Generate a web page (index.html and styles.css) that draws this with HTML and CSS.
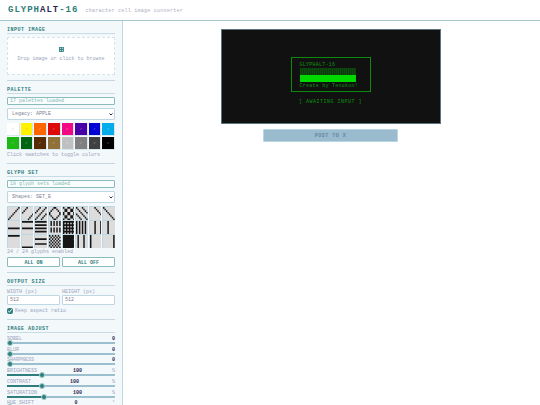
FILE: index.html
```html
<!DOCTYPE html>
<html lang="en">
<head>
<meta charset="utf-8">
<title>GLYPHALT-16</title>
<link rel="stylesheet" href="styles.css">
</head>
<body>
<header class="header">
  <h1 class="logo">GLYPH<span class="logo-alt">ALT</span>-16</h1>
  <p class="tagline">character cell image converter</p>
</header>
<div class="layout">
  <aside class="sidebar">
    <section class="section">
      <h2>INPUT IMAGE</h2>
      <button class="dropzone" type="button">
        <svg class="drop-icon" viewBox="0 0 10 10" aria-hidden="true"><rect x="1" y="1" width="8" height="8"/><path d="M5 1v8M1 5h8"/></svg>
        <span>Drop image or click to browse</span>
      </button>
    </section>
    <section class="section">
      <h2>PALETTE</h2>
      <p class="status">17 palettes loaded</p>
      <select class="select" aria-label="Palette"><option>Legacy: APPLE</option></select>
      <div class="swatches" id="swatches"></div>
      <p class="hint">Click swatches to toggle colors</p>
    </section>
    <section class="section">
      <h2>GLYPH SET</h2>
      <p class="status">18 glyph sets loaded</p>
      <select class="select" aria-label="Glyph set"><option>Shapes: SET_E</option></select>
      <div class="glyphs" id="glyphs"></div>
      <p class="hint">24 / 24 glyphs enabled</p>
      <div class="pair toggles">
        <button class="toggle" type="button">ALL ON</button>
        <button class="toggle" type="button">ALL OFF</button>
      </div>
    </section>
    <section class="section">
      <h2>OUTPUT SIZE</h2>
      <div class="pair">
        <div class="field"><label for="w">WIDTH (px)</label><input id="w" type="text" value="512"></div>
        <div class="field"><label for="h">HEIGHT (px)</label><input id="h" type="text" value="512"></div>
      </div>
      <label class="check"><input type="checkbox" checked><span>Keep aspect ratio</span></label>
    </section>
    <section class="section">
      <h2>IMAGE ADJUST</h2>
      <div class="sliders" id="sliders"></div>
    </section>
  </aside>
  <main class="main">
    <div class="screen">
      <div class="banner">
        <p>GLYPHALT-16</p>
        <div class="bar-dim"></div>
        <div class="bar-lit"></div>
        <p>Create by Tenokun!</p>
      </div>
      <p class="waiting">[ AWAITING INPUT ]</p>
    </div>
    <button class="post" type="button">POST TO X</button>
  </main>
</div>
<script src="app.js"></script>
</body>
</html>
```
FILE: styles.css
```css
* { box-sizing: border-box; }

body {
  margin: 0;
  height: 100vh;
  overflow: hidden;
  display: flex;
  flex-direction: column;
  background: #fff;
  color: #9aa3bd;
  font: 5px/6px "Liberation Mono", monospace;
}

h1, h2, p { margin: 0; }

button, input, select { font: inherit; color: inherit; margin: 0; }

.header {
  flex: none;
  display: flex;
  align-items: center;
  gap: 7px;
  height: 21px;
  padding: 0 8px;
  border-bottom: 1px solid #a6c5d1;
}

.logo {
  font-size: 9px;
  line-height: 10px;
  letter-spacing: 1px;
  color: #2f7d7d;
}

.logo-alt { color: #2d2b55; }

.tagline { padding-top: 2px; letter-spacing: 0.05em; color: #a9adc4; }

.layout { flex: 1; min-height: 0; display: flex; }

.sidebar {
  flex: none;
  width: 123px;
  padding: 0 7px;
  overflow: hidden;
  background: #f3f8fb;
  border-right: 1px solid #bed7e2;
}

.section {
  padding: 6px 0 5px;
  border-bottom: 1px solid #c4d6e2;
}

.section h2 {
  margin-bottom: 3px;
  border-bottom: 1px solid #c9dce6;
  font-size: 5px;
  line-height: 6px;
  letter-spacing: 0.1em;
  color: #2f7d7d;
}

.dropzone {
  display: flex;
  flex-direction: column;
  align-items: center;
  gap: 4px;
  width: 100%;
  height: 38px;
  padding: 9px 0 0;
  border: 1px dashed #d2e5ec;
  background: #fff;
}

.drop-icon {
  width: 5px;
  height: 5px;
  fill: #a9cece;
  stroke: #2f7d7d;
  stroke-width: 1.6;
}

.status {
  height: 8px;
  margin-bottom: 3px;
  padding: 0 2px;
  border: 1px solid #8bbcbc;
  border-radius: 1px;
  background: #f9fdfd;
  color: #86b9b9;
}

.select {
  display: block;
  width: 100%;
  height: 12px;
  margin-bottom: 3px;
  padding: 0 4px;
  border: 1px solid #bed7e2;
  border-radius: 1px;
  appearance: none;
  background: #fff url("data:image/svg+xml,%3Csvg xmlns='http://www.w3.org/2000/svg' viewBox='0 0 4 3'%3E%3Cpath d='M.5 .5 2 2 3.5 .5' fill='none' stroke='%232d2b55'/%3E%3C/svg%3E") no-repeat right 1px center / 4px 3px;
  color: #7b7d94;
}

.swatches, .glyphs {
  display: grid;
  grid-template-columns: repeat(8, 1fr);
  grid-auto-rows: 13px;
  gap: 1px;
  margin-bottom: 2px;
}

.swatch {
  padding: 0;
  border: 1px solid #d5e6ed;
  border-width: 0 1px 1px 0;
  color: #ffffffaa;
  font-size: 4px;
  line-height: 4px;
}

.swatch.light { color: #777b88aa; }

.glyph {
  padding: 0;
  border: 1px solid #bed7e2;
  border-width: 1px 0 0 1px;
  background: #dcdcdc;
}

.glyph svg { display: block; width: 100%; height: 100%; fill: #161616; }

.glyphs { gap: 0 1px; grid-auto-rows: 14px; margin-bottom: 1px; }

.pair { display: grid; grid-template-columns: 1fr 1fr; gap: 2px; }

.toggles { margin-top: 2px; }

.toggle {
  height: 10px;
  padding: 1px 0 0;
  border: 1px solid #8bbcbc;
  border-radius: 1px;
  background: #fff;
  color: #2f7d7d;
  font-weight: bold;
}

.field label { display: block; }

.field input {
  display: block;
  width: 100%;
  height: 10px;
  padding: 0 2px;
  border: 1px solid #bed7e2;
  border-radius: 1px;
  background: #fff;
  color: #7b7d94;
}

.check {
  display: flex;
  align-items: center;
  gap: 2px;
  margin-top: 3px;
}

.check input { width: 6px; height: 6px; accent-color: #2f7d7d; }

.sliders { display: grid; grid-auto-rows: 1fr; height: 75px; }

.slider-head { display: flex; justify-content: space-between; }

.slider-head output { padding-left: 6px; color: #2d2b55; font-weight: bold; }

.slider input {
  display: block;
  width: 100%;
  height: 2px;
  appearance: none;
  background: linear-gradient(90deg, #2f7d7d var(--fill), #9bbfcf var(--fill));
}

.slider input::-webkit-slider-thumb {
  appearance: none;
  width: 6px;
  height: 6px;
  border: 1px solid #a3cccc;
  border-radius: 50%;
  background: #2f7d7d;
}

.main {
  flex: 1;
  display: flex;
  flex-direction: column;
  align-items: center;
  gap: 5px;
  padding: 8px 10px 8px 8px;
}

.screen {
  display: flex;
  flex-direction: column;
  align-items: center;
  gap: 7px;
  width: 100%;
  max-width: 220px;
  padding: 27px 0 18px;
  border: 1px solid #5b7480;
  background: #111;
  color: #0c960c;
  letter-spacing: 0.05em;
}

.banner {
  width: 80px;
  padding: 4px 8px 2px;
  border: 1px solid #0b8a0b;
  white-space: nowrap;
}

.bar-dim, .bar-lit { width: 56px; }

.bar-dim {
  height: 7px;
  background: repeating-linear-gradient(90deg, #0e4c0e 0 1px, #0e3c0e 1px 2px);
}

.bar-lit { height: 7px; margin-bottom: 1px; background: #00d900; }

.waiting { letter-spacing: 0.1em; }

.post {
  width: 135px;
  height: 13px;
  padding: 1px 0 0;
  border: 1px solid #b7d5e2;
  border-radius: 1px;
  background: #9abace;
  color: #63879e;
  font-weight: bold;
  letter-spacing: 0.1em;
}
```
FILE: app.js
```js
const swatches = [
  "#ffffff", "#fff200", "#ff6600", "#dd0808", "#f20884", "#4600a5", "#0000d4", "#02abea",
  "#1fb714", "#006411", "#562c05", "#90713a", "#c0c0c0", "#808080", "#404040", "#000000"
];
document.getElementById("swatches").innerHTML = swatches.map((c, i) =>
  `<button type="button" class="swatch${i < 2 ? " light" : ""}" style="background-color:${c}">✓</button>`
).join("");

// Each glyph is a test that tells whether pixel (x, y) of an 8x8 cell is set.
const rising = (...n) => (x, y) => n.includes(x + y);
const falling = (...n) => (x, y) => n.includes(x - y);
const rows = (...n) => (x, y) => n.includes(y);
const cols = (...n) => (x) => n.includes(x);
const glyphs = [
  rising(7), rising(3, 11), rising(3, 7, 11),
  (x, y) => Math.abs(x - 3.5) + Math.abs(y - 3.5) === 4,
  (x, y) => (x + y) % 4 === 3 || (x - y + 8) % 4 === 0,
  falling(-4, 0, 4), falling(3), falling(0),
  rows(4), rows(0, 4), rows(0, 2, 4, 6),
  (x, y) => x % 2 === 1 && y % 4 !== 3,
  (x, y) => x % 2 === 0 || y % 2 === 0,
  cols(0, 2, 4, 6), cols(3, 7), cols(3),
  rows(0), rows(7), rows(2, 5),
  (x, y) => (x + y) % 2 === 0,
  () => true,
  cols(1, 5), cols(0), cols(7)
];
document.getElementById("glyphs").innerHTML = glyphs.map((on, i) => {
  let d = "";
  for (let y = 0; y < 8; y++)
    for (let x = 0; x < 8; x++)
      if (on(x, y)) d += `M${x} ${y}h1v1h-1z`;
  return `<button type="button" class="glyph" aria-label="Glyph ${i + 1}"><svg viewBox="0 0 8 8" preserveAspectRatio="none"><path d="${d}"/></svg></button>`;
}).join("");

const sliders = [
  ["SOBEL", 0, 0, 100, ""], ["BLUR", 0, 0, 100, ""], ["SHARPNESS", 0, 0, 100, ""],
  ["BRIGHTNESS", 100, 10, 300, "%"], ["CONTRAST", 100, 10, 300, "%"],
  ["SATURATION", 100, 0, 300, "%"], ["HUE SHIFT", 0, 0, 360, "°"]
];
document.getElementById("sliders").innerHTML = sliders.map(([name, v, min, max, unit], i) =>
  `<div class="slider"><div class="slider-head"><label for="s${i}">${name}</label><output>${v}</output>${unit ? `<span>${unit}</span>` : ""}</div>` +
  `<input id="s${i}" type="range" min="${min}" max="${max}" value="${v}" style="--fill:${Math.round((v - min) / (max - min) * 100)}%"></div>`
).join("");
```
